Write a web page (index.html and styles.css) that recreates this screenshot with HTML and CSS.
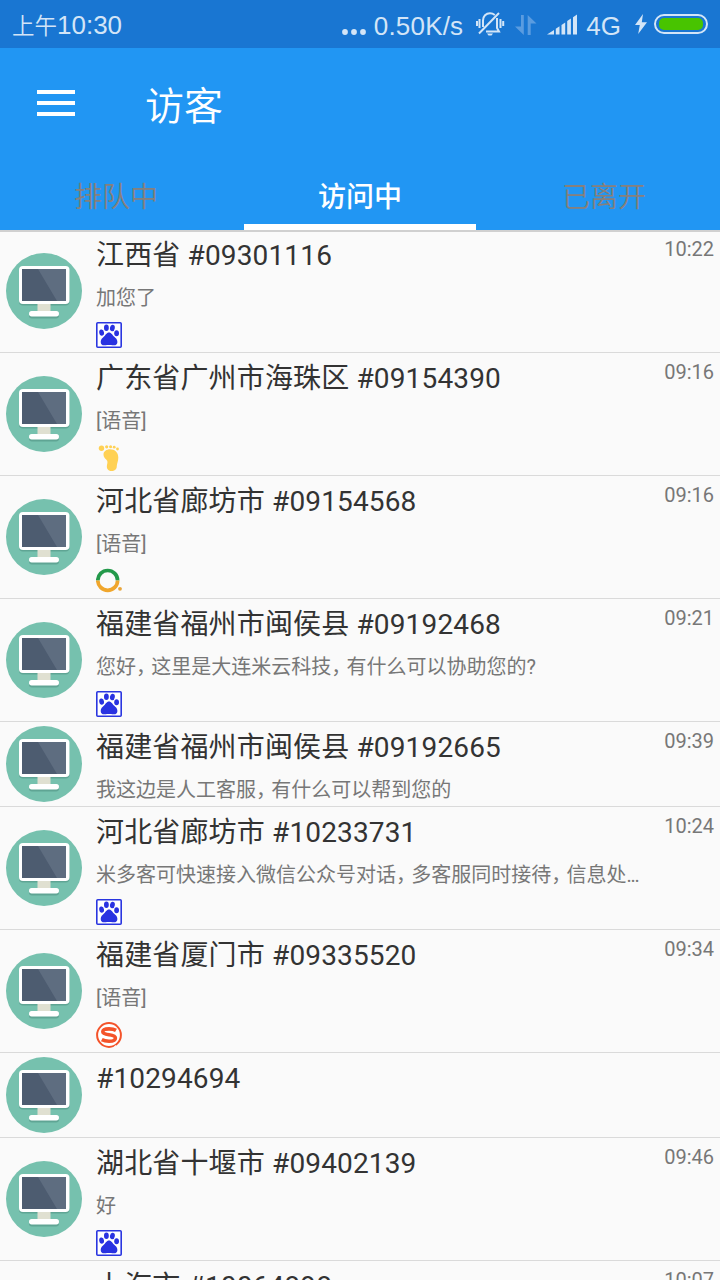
FILE: index.html
```html
<!DOCTYPE html>
<html lang="zh-CN">
<head>
    <meta charset="UTF-8">
    <meta name="viewport" content="width=device-width, initial-scale=1.0">
    <title>访客</title>
    <link rel="stylesheet" href="styles.css">
</head>
<body>
    <!-- shared icons -->
    <svg class="defs" width="0" height="0">
        <symbol id="monitor" viewBox="0 0 76 76">
            <circle cx="38" cy="38" r="38" fill="#76c1ae"/>
            <rect x="13" y="15" width="50.5" height="37.5" rx="4" fill="#5fa594"/>
            <rect x="23" y="59.5" width="30" height="6" rx="3" fill="#5fa594"/>
            <rect x="31.5" y="50" width="13" height="9" fill="#e0e0d1"/>
            <rect x="23" y="58" width="30" height="5.5" rx="2.7" fill="#fff"/>
            <rect x="13" y="13" width="50.5" height="38" rx="4" fill="#fff"/>
            <rect x="16" y="16" width="44" height="32" fill="#4d5c70"/>
            <path d="M32 16H60V48H51Z" fill="#5e6d80"/>
        </symbol>
        <symbol id="baidu" viewBox="0 0 26 26">
            <rect x=".8" y=".8" width="24.4" height="24.4" rx="1" fill="#fff" stroke="#2a36e0" stroke-width="1.6"/>
            <g fill="#2932e1">
                <ellipse cx="10.4" cy="5.8" rx="2.4" ry="3.3"/>
                <ellipse cx="16.4" cy="6" rx="2.4" ry="3.2" transform="rotate(10 16.4 6)"/>
                <ellipse cx="5.6" cy="10.6" rx="2.4" ry="3.1" transform="rotate(-8 5.6 10.6)"/>
                <ellipse cx="20.6" cy="11.2" rx="2.4" ry="3"/>
                <path d="M13 10.5C15.5 10.5 16.3 13 18 14.6C19.8 16.2 21.4 17.5 21.4 20C21.4 22.5 19.5 23.6 17.3 23.3C15.5 23 14.5 22.9 13 22.9S10.5 23 8.800 23.3C6.5 23.6 4.7 22.5 4.7 20C4.7 17.5 6.3 16.2 8 14.6C9.7 13 10.5 10.5 13 10.5Z"/>
            </g>
        </symbol>
        <symbol id="foot" viewBox="0 0 26 26">
            <g fill="#ffd154">
                <circle cx="5.5" cy="3.2" r="2.7"/>
                <circle cx="10.7" cy="1.8" r="1.6"/>
                <circle cx="14.6" cy="1.7" r="1.5"/>
                <circle cx="18.2" cy="2.2" r="1.4"/>
                <circle cx="21.5" cy="4" r="1.4"/>
                <path d="M7.5 9.5C7.5 6.5 10.5 4.3 14 4.3C19 4.3 22.3 7.5 22.3 12.500C22.3 16.5 20.800 18.5 20.800 21C20.800 24.2 18.8 26 15.4 26C12 26 10.3 23.5 11 20C11.500 17.5 12 16.5 10.2 14.5C8.6 13 7.5 11.8 7.5 9.5Z"/>
            </g>
        </symbol>
        <symbol id="so360" viewBox="0 0 26 26">
            <path d="M1.8 12.4A9.8 9.8 0 0 1 21.6 12.4" fill="none" stroke="#23994a" stroke-width="3.7"/>
            <path d="M1.8 12.4A9.8 9.8 0 0 0 21.6 12.4" fill="none" stroke="#f0a62c" stroke-width="3.7"/>
            <circle cx="24" cy="20.8" r="1.9" fill="#e9a63c"/>
        </symbol>
        <symbol id="sogou" viewBox="0 0 26 26">
            <circle cx="13" cy="13" r="11.9" fill="#fff" stroke="#f4532a" stroke-width="2"/>
            <path d="M20 8.400C18 7.2 15.6 6.900 13 6.900C9.2 6.900 6.8 7.900 6.8 9.8C6.8 14.2 19.4 11.300 19.4 15.900C19.4 18.200 16.6 19.2 13 19.2C10.4 19.2 7.8 18.7 5.8 17.600" fill="none" stroke="#f4532a" stroke-width="3.6"/>
            <path d="M17.5 25.8L20 23.500M21.5 25L25 21.8" stroke="#fafafa" stroke-width="1.1"/>
        </symbol>
    </svg>

    <div class="status-bar">
        <span class="clock"><span class="ampm">上午</span>10:30</span>
        <svg class="dots" width="24" height="6" viewBox="0 0 24 6">
            <circle cx="3" cy="3" r="2.9"/><circle cx="12" cy="3" r="2.9"/><circle cx="21" cy="3" r="2.9"/>
        </svg>
        <span class="speed">0.50K/s</span>
        <svg class="bell" width="30" height="26" viewBox="0 0 30 26">
            <path d="M8 16V9.500C8 5 11 2.300 15 2.300C17 2.300 18.500 3 19.800 4M22 7V17L24 20.500H11M4.500 8V17M2 10V15M25.500 8V17M28.200 10V15M4 22.500L24 2"/>
            <path class="clapper" d="M12 22.500H18L16.500 24.500H13.500Z"/>
        </svg>
        <svg class="updown" width="22" height="20" viewBox="0 0 22 20">
            <path d="M6 0H8.800V20L0 11.500H6ZM12.700 0L21.500 8.500H15.700V20H12.700Z"/>
        </svg>
        <svg class="signal" width="31" height="21" viewBox="0 0 31 21">
            <path d="M0 20.500L7 16V20.500ZM8.800 14.800L12.500 12.300V20.500H8.800ZM14.500 10.900L18.200 8.500V20.500H14.500ZM20.200 7.100L23.900 4.600V20.500H20.200ZM26 3.200L30 .5V20.500H26Z"/>
        </svg>
        <span class="network">4G</span>
        <svg class="bolt" width="12" height="20" viewBox="0 0 12 20">
            <path d="M8 0L0 11H4.800L3.200 20L12 8.300H6.800Z"/>
        </svg>
        <span class="battery"><span class="level"></span></span>
    </div>

    <header class="app-header">
        <div class="toolbar">
            <div class="menu"><i></i><i></i><i></i></div>
            <h1>访客</h1>
        </div>
        <nav class="tabs">
            <span class="tab">排队中</span>
            <span class="tab active">访问中</span>
            <span class="tab">已离开</span>
        </nav>
    </header>

    <main class="visitors">
        <div class="visitor">
            <svg class="avatar"><use href="#monitor"/></svg>
            <div class="info">
                <h2>江西省 #09301116</h2>
                <p>加您了</p>
                <svg class="source"><use href="#baidu"/></svg>
            </div>
            <time>10:22</time>
        </div>
        <div class="visitor">
            <svg class="avatar"><use href="#monitor"/></svg>
            <div class="info">
                <h2>广东省广州市海珠区 #09154390</h2>
                <p>[语音]</p>
                <svg class="source"><use href="#foot"/></svg>
            </div>
            <time>09:16</time>
        </div>
        <div class="visitor">
            <svg class="avatar"><use href="#monitor"/></svg>
            <div class="info">
                <h2>河北省廊坊市 #09154568</h2>
                <p>[语音]</p>
                <svg class="source"><use href="#so360"/></svg>
            </div>
            <time>09:16</time>
        </div>
        <div class="visitor">
            <svg class="avatar"><use href="#monitor"/></svg>
            <div class="info">
                <h2>福建省福州市闽侯县 #09192468</h2>
                <p>您好<span class="comma">，</span>这里是大连米云科技<span class="comma">，</span>有什么可以协助您的?</p>
                <svg class="source"><use href="#baidu"/></svg>
            </div>
            <time>09:21</time>
        </div>
        <div class="visitor">
            <svg class="avatar"><use href="#monitor"/></svg>
            <div class="info">
                <h2>福建省福州市闽侯县 #09192665</h2>
                <p>我这边是人工客服<span class="comma">，</span>有什么可以帮到您的</p>
            </div>
            <time>09:39</time>
        </div>
        <div class="visitor">
            <svg class="avatar"><use href="#monitor"/></svg>
            <div class="info">
                <h2>河北省廊坊市 #10233731</h2>
                <p>米多客可快速接入微信公众号对话<span class="comma">，</span>多客服同时接待<span class="comma">，</span>信息处<span class="more">...</span></p>
                <svg class="source"><use href="#baidu"/></svg>
            </div>
            <time>10:24</time>
        </div>
        <div class="visitor">
            <svg class="avatar"><use href="#monitor"/></svg>
            <div class="info">
                <h2>福建省厦门市 #09335520</h2>
                <p>[语音]</p>
                <svg class="source"><use href="#sogou"/></svg>
            </div>
            <time>09:34</time>
        </div>
        <div class="visitor">
            <svg class="avatar"><use href="#monitor"/></svg>
            <div class="info">
                <h2>#10294694</h2>
            </div>
        </div>
        <div class="visitor">
            <svg class="avatar"><use href="#monitor"/></svg>
            <div class="info">
                <h2>湖北省十堰市 #09402139</h2>
                <p>好</p>
                <svg class="source"><use href="#baidu"/></svg>
            </div>
            <time>09:46</time>
        </div>
        <div class="visitor">
            <svg class="avatar"></svg>
            <div class="info">
                <h2>上海市 #10064898</h2>
            </div>
            <time>10:07</time>
        </div>
    </main>
</body>
</html>
```

FILE: styles.css
```css
* {
    box-sizing: border-box;
}
body {
    margin: 0;
    width: 720px;
    height: 1280px;
    overflow: hidden;
    background: #fafafa;
    font-family: Roboto, "Noto Sans CJK SC", sans-serif;
}
svg {
    display: block;
    flex: none;
}
.defs {
    position: absolute;
}

/* status bar */
.status-bar {
    display: flex;
    align-items: center;
    height: 48px;
    padding: 4px 12px 0;
    background: #1976d2;
    color: #d3e5f7;
    fill: #d3e5f7;
    font-family: "Liberation Sans", "Noto Sans CJK SC", sans-serif;
    font-size: 26px;
    line-height: 44px;
}
.clock {
    margin-right: auto;
}
.ampm {
    font-size: 22.5px;
    font-weight: 350;
}
.dots {
    margin: 11px 8px 0 0;
}
.speed {
    letter-spacing: 0.2px;
}
.bell {
    margin: -4px 10px 0 12px;
    fill: none;
    stroke: #d3e5f7;
    stroke-width: 2;
}
.clapper {
    fill: #d3e5f7;
    stroke: none;
}
.updown {
    margin: -3px 10px 0 0;
    fill: #5a9ce0;
}
.signal {
    margin: -3px 8px 0 0;
}
.bolt {
    margin: -4px 7px 0 14px;
}
.battery {
    width: 54px;
    height: 20px;
    margin-top: -4px;
    padding: 2px;
    border: 2px solid #d3e5f7;
    border-radius: 10px;
}
.level {
    display: block;
    height: 12px;
    margin: 0 1px;
    border-radius: 5px;
    background: #48c400;
}

/* header */
.app-header {
    height: 184px;
    border-bottom: 2px solid #d0d0d0;
    background: #2196f3;
    color: #fff;
}
.toolbar {
    display: flex;
    align-items: center;
    height: 112px;
    padding-left: 37px;
}
.menu {
    display: flex;
    flex-direction: column;
    gap: 7px;
    width: 38px;
    margin: -2px 70px 0 0;
}
.menu i {
    height: 4px;
    background: #fff;
}
h1 {
    margin: 5px 0 0;
    font-size: 39px;
    font-weight: 350;
    line-height: 56px;
}
.tabs {
    display: flex;
    gap: 12px;
    height: 70px;
}
.tab {
    flex: 1;
    padding-top: 3px;
    color: #86807c;
    font-size: 28px;
    font-weight: 350;
    line-height: 70px;
    text-align: center;
}
.tab.active {
    height: 70px;
    border-bottom: 6px solid #fff;
    color: #fff;
    font-weight: 500;
}

/* visitor list, first row starts under the header line */
.visitors {
    height: 1050px;
    margin-top: -2px;
    overflow: hidden;
}
.visitor {
    display: flex;
    align-items: center;
    min-height: 85px;
    padding: 0 6px;
    border-bottom: 1px solid #dadada;
}
.avatar {
    width: 76px;
    height: 76px;
    margin-bottom: 1px;
}
.info {
    flex: 1;
    align-self: flex-start;
    margin-left: 14px;
    white-space: nowrap;
}
h2 {
    height: 48px;
    margin: 0;
    color: #333;
    font-size: 28px;
    font-weight: 400;
    letter-spacing: 0.15px;
    line-height: 51px;
}
.info p {
    height: 36px;
    margin: 0;
    color: #777;
    font-size: 20px;
    line-height: 40px;
}
.comma {
    letter-spacing: -4.8px;
}
.more {
    letter-spacing: -1.2px;
}
.source {
    width: 26px;
    height: 26px;
    margin: 8px 0 4px;
    overflow: visible;
}
time {
    align-self: flex-start;
    color: #777;
    font-size: 20px;
    line-height: 39px;
}
```
